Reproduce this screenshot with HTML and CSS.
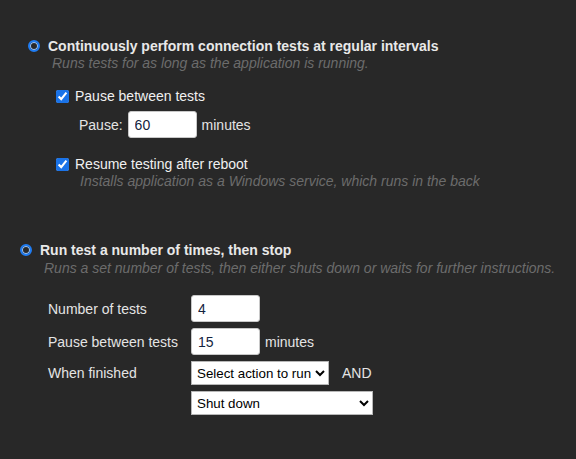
FILE: index.html
```html
<!DOCTYPE html>
<html lang="en">

<head>
    <meta charset="UTF-8">
    <meta name="viewport" content="width=device-width, initial-scale=1.0">
    <title>Test schedule</title>
    <link rel="stylesheet" href="styles.css">
</head>

<body>
    <!-- Modo continuo -->
    <div class="option option-continuous">
        <label class="option-head">
            <span class="radio"></span>
            <span>Continuously perform connection tests at regular intervals</span>
        </label>
        <div class="hint hint-first">Runs tests for as long as the application is running.</div>

        <label class="check-row">
            <input type="checkbox" checked>
            <span>Pause between tests</span>
        </label>
        <div class="pause-row">
            <span>Pause:</span>
            <input type="text" class="num-input" value="60">
            <span>minutes</span>
        </div>

        <label class="check-row check-reboot">
            <input type="checkbox" checked>
            <span>Resume testing after reboot</span>
        </label>
        <div class="hint hint-service">Installs application as a Windows service, which runs in the back</div>
    </div>

    <!-- Numero fixo de testes -->
    <div class="option option-count">
        <label class="option-head">
            <span class="radio"></span>
            <span>Run test a number of times, then stop</span>
        </label>
        <div class="hint hint-second">Runs a set number of tests, then either shuts down or waits for further instructions.</div>

        <div class="form-grid">
            <span>Number of tests</span>
            <div class="field"><input type="text" class="num-input" value="4"></div>

            <span>Pause between tests</span>
            <div class="field"><input type="text" class="num-input" value="15"><span>minutes</span></div>

            <span>When finished</span>
            <div class="field">
                <select class="action-select">
                    <option>Select action to run</option>
                </select>
                <span class="and">AND</span>
            </div>

            <span></span>
            <div class="field">
                <select class="final-select">
                    <option>Shut down</option>
                </select>
            </div>
        </div>
    </div>
</body>

</html>
```

FILE: styles.css
```css
body {
    margin: 0;
    background-color: #282828;
    color: #e4e4e4;
    font-family: "Liberation Sans", Arial, sans-serif;
    font-size: 14px;
    line-height: 16px;
}

.option-continuous {
    padding: 38px 0 0 28px;
    height: 196px;
}

.option-count {
    padding: 8px 0 0 20px;
}

.option-head {
    display: flex;
    align-items: center;
    gap: 8px;
    font-weight: bold;
    color: #e8e8e8;
}

.radio {
    width: 8px;
    height: 8px;
    border: 2px solid #1f7cf2;
    border-radius: 50%;
    background-color: #282828;
    box-shadow: inset 0 0 0 1px #9cc4f5;
}

.hint {
    font-style: italic;
    color: #6c6c6c;
    white-space: nowrap;
}

.hint-first {
    margin: 1px 0 0 24px;
}

.hint-second {
    margin: 2px 0 0 24px;
}

.hint-service {
    margin: 1px 0 0 52px;
    width: 400px;
    overflow: hidden;
}

.check-row {
    display: flex;
    align-items: center;
    gap: 6px;
    margin: 17px 0 0 28px;
    color: #f0f0f0;
}

.check-row input {
    width: 13px;
    height: 13px;
    margin: 0;
    accent-color: #1a73e8;
}

.check-reboot {
    margin-top: 18px;
}

.pause-row {
    display: flex;
    align-items: center;
    gap: 5px;
    margin: 7px 0 0 51px;
}

.num-input {
    box-sizing: border-box;
    width: 69px;
    height: 27px;
    padding: 0 6px;
    border: 1px solid #c8c8c8;
    border-radius: 3px;
    background-color: #fff;
    color: #13233e;
    font-family: inherit;
    font-size: 14px;
}

.form-grid {
    display: grid;
    grid-template-columns: 143px auto;
    row-gap: 6px;
    align-items: center;
    margin: 19px 0 0 28px;
}

.form-grid > span {
    color: #e4e4e4;
}

.field {
    display: flex;
    align-items: center;
    gap: 5px;
}

select {
    box-sizing: border-box;
    height: 24px;
    padding: 0 1px;
    border: 1px solid #b8b8b8;
    border-radius: 0;
    background-color: #fff;
    color: #000;
    font-family: inherit;
    font-size: 13.33px;
}

.action-select {
    width: 138px;
}

.and {
    margin-left: 8px;
}

.final-select {
    width: 182px;
}
```
